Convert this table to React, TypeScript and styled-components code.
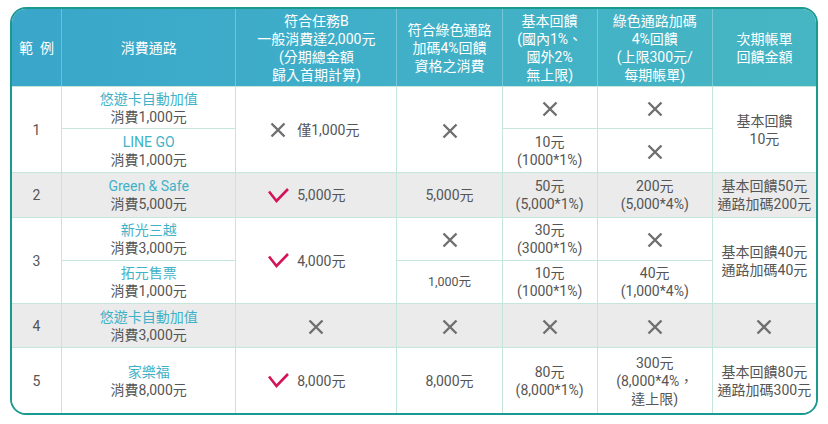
import { ReactElement } from "react";
import styled, { createGlobalStyle } from "styled-components";

const GlobalStyle = createGlobalStyle`
  body {
    margin: 0;
    background: #ffffff;
    font-family: Roboto, "Noto Sans CJK TC", "Noto Sans", sans-serif;
  }
`;

function Cross(): ReactElement {
  return (
    <Icon>
      <svg width="16" height="16" viewBox="0 0 16 16">
        <path
          d="M1.5 1.5 L14.5 14.5 M14.5 1.5 L1.5 14.5"
          stroke="#6f6f6f"
          strokeWidth="2.4"
          fill="none"
        />
      </svg>
    </Icon>
  );
}

function Check(): ReactElement {
  return (
    <Icon>
      <svg width="21" height="15" viewBox="0 0 21 15">
        <polyline
          points="1,3.5 8.5,13 20,1"
          stroke="#d4145a"
          strokeWidth="2.6"
          fill="none"
        />
      </svg>
    </Icon>
  );
}

function App(): ReactElement {
  return (
    <Page>
      <GlobalStyle />
      <TableFrame>
        <Table>
          <colgroup>
            <col style={{ width: 50 }} />
            <col style={{ width: 174 }} />
            <col style={{ width: 161 }} />
            <col style={{ width: 105 }} />
            <col style={{ width: 95 }} />
            <col style={{ width: 115 }} />
            <col style={{ width: 104 }} />
          </colgroup>
          <thead>
            <HeadRow>
              <HeadCell>範&ensp;例</HeadCell>
              <HeadCell>消費通路</HeadCell>
              <HeadCell>
                符合任務B
                <br />
                一般消費達2,000元
                <br />
                (分期總金額
                <br />
                歸入首期計算)
              </HeadCell>
              <HeadCell>
                符合綠色通路
                <br />
                加碼4%回饋
                <br />
                資格之消費
              </HeadCell>
              <HeadCell>
                基本回饋
                <br />
                (國內1%、
                <br />
                國外2%
                <br />
                無上限)
              </HeadCell>
              <HeadCell>
                綠色通路加碼
                <br />
                4%回饋
                <br />
                (上限300元/
                <br />
                每期帳單)
              </HeadCell>
              <HeadCell>
                次期帳單
                <br />
                回饋金額
              </HeadCell>
            </HeadRow>
          </thead>
          <tbody>
            <Row $h={42}>
              <Cell rowSpan={2}>1</Cell>
              <Cell>
                <Store>悠遊卡自動加值</Store>
                <div>消費1,000元</div>
              </Cell>
              <Cell rowSpan={2}>
                <Mark>
                  <Cross />
                  僅1,000元
                </Mark>
              </Cell>
              <Cell rowSpan={2}>
                <Cross />
              </Cell>
              <Cell>
                <Cross />
              </Cell>
              <Cell>
                <Cross />
              </Cell>
              <Cell rowSpan={2}>
                基本回饋
                <br />
                10元
              </Cell>
            </Row>
            <Row $h={44}>
              <Cell>
                <Store>LINE GO</Store>
                <div>消費1,000元</div>
              </Cell>
              <Cell>
                10元
                <br />
                (1000*1%)
              </Cell>
              <Cell>
                <Cross />
              </Cell>
            </Row>

            <Row $h={45} $shade>
              <Cell>2</Cell>
              <Cell>
                <Store>Green &amp; Safe</Store>
                <div>消費5,000元</div>
              </Cell>
              <Cell>
                <Mark>
                  <Check />
                  5,000元
                </Mark>
              </Cell>
              <Cell>5,000元</Cell>
              <Cell>
                50元
                <br />
                (5,000*1%)
              </Cell>
              <Cell>
                200元
                <br />
                (5,000*4%)
              </Cell>
              <Cell>
                基本回饋50元
                <br />
                通路加碼200元
              </Cell>
            </Row>

            <Row $h={43}>
              <Cell rowSpan={2}>3</Cell>
              <Cell>
                <Store>新光三越</Store>
                <div>消費3,000元</div>
              </Cell>
              <Cell rowSpan={2}>
                <Mark>
                  <Check />
                  4,000元
                </Mark>
              </Cell>
              <Cell>
                <Cross />
              </Cell>
              <Cell>
                30元
                <br />
                (3000*1%)
              </Cell>
              <Cell>
                <Cross />
              </Cell>
              <Cell rowSpan={2}>
                基本回饋40元
                <br />
                通路加碼40元
              </Cell>
            </Row>
            <Row $h={43}>
              <Cell>
                <Store>拓元售票</Store>
                <div>消費1,000元</div>
              </Cell>
              <Cell $small>1,000元</Cell>
              <Cell>
                10元
                <br />
                (1000*1%)
              </Cell>
              <Cell>
                40元
                <br />
                (1,000*4%)
              </Cell>
            </Row>

            <Row $h={44} $shade>
              <Cell>4</Cell>
              <Cell>
                <Store>悠遊卡自動加值</Store>
                <div>消費3,000元</div>
              </Cell>
              <Cell>
                <Cross />
              </Cell>
              <Cell>
                <Cross />
              </Cell>
              <Cell>
                <Cross />
              </Cell>
              <Cell>
                <Cross />
              </Cell>
              <Cell>
                <Cross />
              </Cell>
            </Row>

            <Row $h={66}>
              <Cell>5</Cell>
              <Cell>
                <Store>家樂福</Store>
                <div>消費8,000元</div>
              </Cell>
              <Cell>
                <Mark>
                  <Check />
                  8,000元
                </Mark>
              </Cell>
              <Cell>8,000元</Cell>
              <Cell>
                80元
                <br />
                (8,000*1%)
              </Cell>
              <Cell>
                300元
                <br />
                (8,000*4%，
                <br />
                達上限)
              </Cell>
              <Cell>
                基本回饋80元
                <br />
                通路加碼300元
              </Cell>
            </Row>
          </tbody>
        </Table>
      </TableFrame>
    </Page>
  );
}

const Page = styled.div`
  padding: 7px 0 0 10px;
`;

const TableFrame = styled.div`
  width: 808px;
  box-sizing: border-box;
  border: 2px solid #19998f;
  border-radius: 16px;
  overflow: hidden;
`;

const Table = styled.table`
  width: calc(100% + 2px);
  margin: -1px;
  border-collapse: collapse;
  table-layout: fixed;
  font-size: 14px;
  line-height: 18px;
  color: #555555;
`;

const HeadRow = styled.tr`
  height: 78px;
  background: linear-gradient(90deg, #39a6ca 0%, #40afc8 45%, #46b6c3 100%);
`;

const HeadCell = styled.th`
  padding: 0;
  font-weight: 400;
  color: #ffffff;
  text-align: center;
  vertical-align: middle;
  border: 1px solid rgba(255, 255, 255, 0.28);
  border-bottom: 1px solid #c6e6dc;
`;

const Row = styled.tr<{ $h: number; $shade?: boolean }>`
  height: ${(props) => props.$h}px;
  background: ${(props) => (props.$shade ? "#ebebeb" : "#ffffff")};
`;

const Cell = styled.td<{ $small?: boolean }>`
  padding: 0;
  text-align: center;
  vertical-align: middle;
  border: 1px solid #c6e6dc;
  font-size: ${(props) => (props.$small ? "12.5px" : "14px")};
`;

const Store = styled.div`
  color: #3fb2c8;
`;

const Mark = styled.div`
  display: flex;
  align-items: center;
  gap: 7px;
  padding-left: 30px;

  & > span {
    width: 24px;
    justify-content: center;
  }
`;

const Icon = styled.span`
  display: inline-flex;
  vertical-align: middle;
`;

export default App;
